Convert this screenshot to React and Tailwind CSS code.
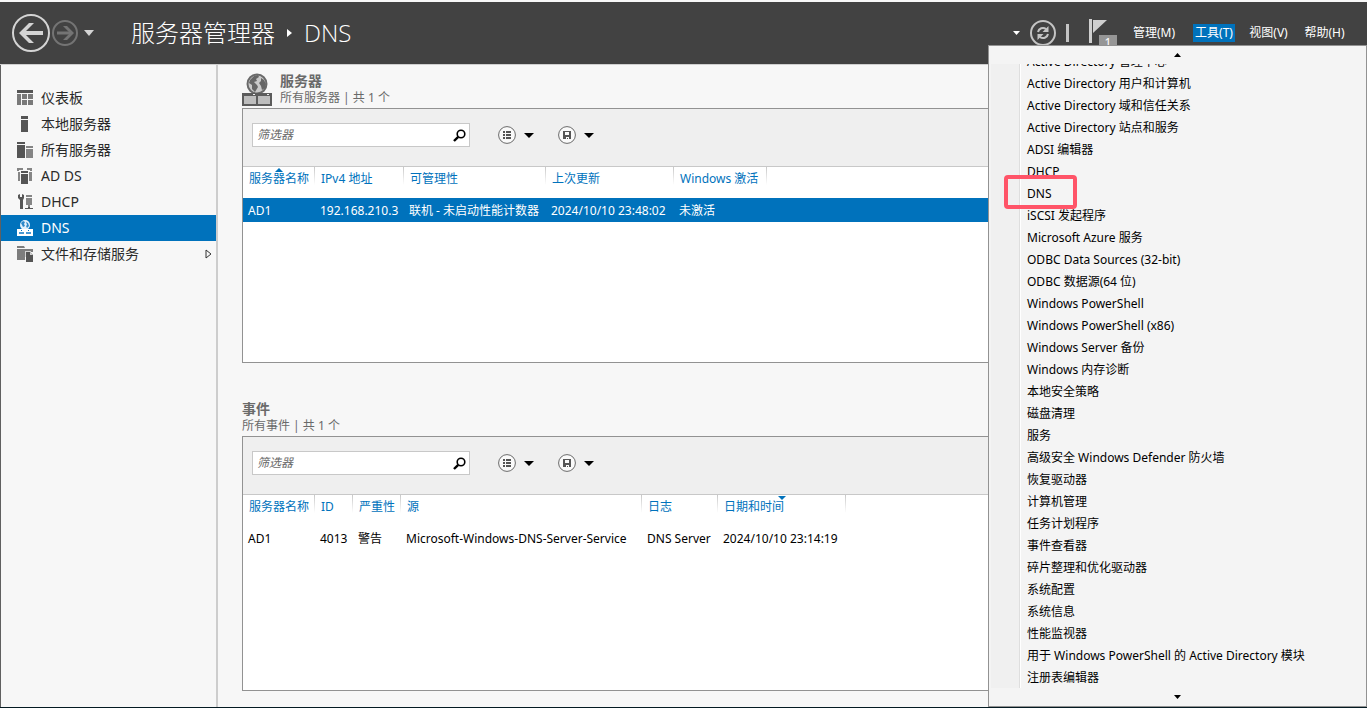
import { useState } from 'react';

const NAV = [
  { id: 'dashboard', label: '仪表板' },
  { id: 'local', label: '本地服务器' },
  { id: 'all', label: '所有服务器' },
  { id: 'adds', label: 'AD DS' },
  { id: 'dhcp', label: 'DHCP' },
  { id: 'dns', label: 'DNS' },
  { id: 'storage', label: '文件和存储服务', expandable: true },
];

const TOOLS = [
  'Active Directory 管理中心',
  'Active Directory 用户和计算机',
  'Active Directory 域和信任关系',
  'Active Directory 站点和服务',
  'ADSI 编辑器',
  'DHCP',
  'DNS',
  'iSCSI 发起程序',
  'Microsoft Azure 服务',
  'ODBC Data Sources (32-bit)',
  'ODBC 数据源(64 位)',
  'Windows PowerShell',
  'Windows PowerShell (x86)',
  'Windows Server 备份',
  'Windows 内存诊断',
  '本地安全策略',
  '磁盘清理',
  '服务',
  '高级安全 Windows Defender 防火墙',
  '恢复驱动器',
  '计算机管理',
  '任务计划程序',
  '事件查看器',
  '碎片整理和优化驱动器',
  '系统配置',
  '系统信息',
  '性能监视器',
  '用于 Windows PowerShell 的 Active Directory 模块',
  '注册表编辑器',
];

const SERVER_COLUMNS = [
  { label: '服务器名称', width: 'w-[72px]', sort: 'asc' },
  { label: 'IPv4 地址', width: 'w-[89px]' },
  { label: '可管理性', width: 'w-[142px]' },
  { label: '上次更新', width: 'w-[128px]' },
  { label: 'Windows 激活', width: 'w-[93px]' },
];

const EVENT_COLUMNS = [
  { label: '服务器名称', width: 'w-[72px]' },
  { label: 'ID', width: 'w-[38px]' },
  { label: '严重性', width: 'w-[48px]' },
  { label: '源', width: 'w-[241px]' },
  { label: '日志', width: 'w-[76px]' },
  { label: '日期和时间', width: 'w-[128px]', sort: 'desc' },
];

const SERVERS = [['AD1', '192.168.210.3', '联机 - 未启动性能计数器', '2024/10/10 23:48:02', '未激活']];
const EVENTS = [['AD1', '4013', '警告', 'Microsoft-Windows-DNS-Server-Service', 'DNS Server', '2024/10/10 23:14:19']];

function Caret({ className = '', up = false, w = 10, h = 5 }) {
  return (
    <svg width={w} height={h} viewBox="0 0 10 5" preserveAspectRatio="none" className={className} aria-hidden="true">
      <path d={up ? 'M0 5h10L5 0z' : 'M0 0h10L5 5z'} fill="currentColor" />
    </svg>
  );
}

function NavIcon({ id }) {
  return (
    <svg width="16" height="16" viewBox="0 0 16 16" className="shrink-0" aria-hidden="true">
      {id === 'dashboard' && (
        <>
          <path d="M0 0h16v3H0z" fill="#555" />
          <path d="M0 4h4v11H0zM5 4h5v5H5zM11 4h5v5h-5zM5 10h5v5H5zM11 10h5v5h-5z" fill="#7a7a7a" />
        </>
      )}
      {id === 'local' && <path d="M4 0h7v3H4zM4 4h7v12H4z" fill="#555" />}
      {id === 'all' && (
        <>
          <path d="M0 0h8v2H0zM0 3h8v13H0z" fill="#555" />
          <path d="M9 4h7v2H9zM9 7h7v9H9z" fill="#858585" />
        </>
      )}
      {id === 'adds' && (
        <>
          <path d="M0 0h6v2H2v1H0zM10 0h5v3h-2V2h-3zM1 4h2v9H1zM12 4h3v9h-3z" fill="#858585" />
          <path d="M4 3h7v2H4zM4 6h7v10H4z" fill="#555" />
        </>
      )}
      {id === 'dhcp' && (
        <>
          <path d="M1 1l2-1v3h2V0l2 1v3L6 6v9H3V6L1 4z" fill="#555" />
          <path d="M9 1h6v2H9zM9 4h6v7H9zM11 11h2v2h-2z" fill="#858585" />
          <path d="M8 14h3v-1h2v1h3v1H8z" fill="#555" />
        </>
      )}
      {id === 'dns' && (
        <>
          <circle cx="8" cy="5" r="5" fill="#e4f1fa" />
          <path d="M4 3l2-2 2 1-1 2 1 2-2 1-1-2zM9 2l2 1 1 3-2 2-1-2 1-1z" fill="#2c88c9" />
          <path d="M0 9h16v7H0z" fill="#fff" />
          <path d="M2 12h5v2H2zM9 12h5v2H9z" fill="#4a9ad4" />
          <path d="M4 10h1v1H4zM11 10h1v1h-1z" fill="#0072bc" />
        </>
      )}
      {id === 'storage' && (
        <>
          <path d="M0 0h7l1 2H0zM0 3h16v3H8v8H0z" fill="#7d7d7d" />
          <path d="M9 6h4l3 3v7H9z" fill="#555" />
          <path d="M8 5h6v1H9v5H8zM13 6l3 3h-3z" fill="#d0d0d0" />
        </>
      )}
    </svg>
  );
}

function GlobeIcon() {
  return (
    <svg width="30" height="33" viewBox="0 0 30 33" className="shrink-0" aria-hidden="true">
      <circle cx="15" cy="11" r="9.5" fill="#c9c9c9" stroke="#6a6a6a" strokeWidth="2" />
      <path d="M8 7l4-4 4-1 1 2-3 2 1 2-3 1 3 3 1 2-3 5-3-3v-4l-3-2zM19 5l3 2 2 4-1 4-3 2-1-4-2-3 2-2z" fill="#666" />
      <path d="M0 20h30v13H0z" fill="#5c5c5c" />
      <path d="M2 23h12v8H2zM16 23h12v8H16z" fill="#bdbdbd" />
      <path d="M11 21h2v1h-2zM25 21h2v1h-2z" fill="#eee" />
    </svg>
  );
}

function Toolbar({ name }) {
  return (
    <div className="flex h-[58px] items-start border-b border-[#c8c8c8] bg-[#efefef] pt-[14px] pl-[9px]">
      <div className="flex h-6 w-[218px] shrink-0 items-center border border-[#c8c8c8] bg-white pr-[3px] pl-1">
        <input
          type="text"
          aria-label={`${name}筛选器`}
          placeholder="筛选器"
          className="min-w-0 flex-1 text-[12px] leading-4 text-black italic outline-none placeholder:text-[#6a6a6a]"
        />
        <button type="button" aria-label="搜索">
          <svg width="13" height="13" viewBox="0 0 13 13" fill="none" stroke="#000">
            <circle cx="8" cy="5" r="3.8" strokeWidth="1.6" />
            <path d="M5.2 7.8L1 12" strokeWidth="2.4" />
          </svg>
        </button>
      </div>
      <button type="button" aria-label="分组" className="ml-7 flex h-6 items-center gap-2">
        <svg width="18" height="18" viewBox="0 0 18 18">
          <circle cx="9" cy="9" r="8.4" fill="#fafafa" stroke="#6a6a6a" />
          <path d="M5 5h2v2H5zM8 5h5v2H8zM5 8h2v2H5zM8 8h5v2H8zM5 11h2v2H5zM8 11h5v2H8z" fill="#555" />
        </svg>
        <Caret />
      </button>
      <button type="button" aria-label="保存" className="ml-6 flex h-6 items-center gap-2">
        <svg width="18" height="18" viewBox="0 0 18 18">
          <circle cx="9" cy="9" r="8.4" fill="#fafafa" stroke="#6a6a6a" />
          <path d="M5 5h8v8h-2v-2H8v2H5zM7 6v3h4V6z" fill="#555" fillRule="evenodd" />
          <path d="M9 12h1v1H9z" fill="#555" />
        </svg>
        <Caret />
      </button>
    </div>
  );
}

function Panel({ name, subtitle, icon, columns, rows, selected }) {
  return (
    <section className="flex flex-1 flex-col">
      <div className="flex h-[35px] shrink-0 gap-2 text-[#6a6a6a]">
        {icon}
        <div>
          <h2 className="text-[14px] leading-4 font-bold">{name}</h2>
          <p className="text-[12px] leading-[18px]">{subtitle}</p>
        </div>
      </div>
      <div className="flex-1 border border-[#929292] bg-white">
        <Toolbar name={name} />
        <table className="w-full table-fixed text-left text-[12px] leading-4 whitespace-nowrap">
          <thead>
            <tr className="h-[31px] text-[#0072bc]">
              {columns.map((col) => (
                <th
                  key={col.label}
                  className={`relative bg-[linear-gradient(#c8c8c8,#fff)] bg-[length:1px_18px] bg-right-top bg-no-repeat pt-1 pl-[6px] align-top font-normal ${col.width}`}
                >
                  {col.label}
                  {col.sort && (
                    <Caret
                      up={col.sort === 'asc'}
                      w={8}
                      h={4}
                      className="absolute top-px left-1/2 -translate-x-1/2"
                    />
                  )}
                </th>
              ))}
              <th />
            </tr>
          </thead>
          <tbody>
            {rows.map((row) => (
              <tr key={row[0]} className={`h-6 ${selected ? 'bg-[#0072bc] text-white' : 'text-black'}`}>
                {row.map((cell) => (
                  <td key={cell} className="pt-[2px] pl-[5px]">{cell}</td>
                ))}
                <td />
              </tr>
            ))}
          </tbody>
        </table>
      </div>
    </section>
  );
}

function ToolsMenu() {
  return (
    <div className="absolute top-[45px] right-0 z-10 w-[379px] border border-[#929292] bg-[#f4f4f4] text-[12px]">
      <button type="button" aria-label="向上滚动" className="flex h-[18px] w-full items-center justify-center">
        <Caret up w={7} h={4} />
      </button>
      <div className="flex h-[624px] overflow-hidden pl-[2px]">
        <div className="w-[29px] shrink-0 border-r border-[#dedede] bg-[#f0f0f0]" />
        <ul className="-mt-[14px] flex-1 border-l border-white">
          {TOOLS.map((tool) => (
            <li key={tool} className="relative">
              <button type="button" className="block h-[22px] w-full pl-[6px] text-left leading-6 whitespace-nowrap text-black">
                {tool}
              </button>
              {tool === 'DNS' && (
                <span className="pointer-events-none absolute -top-[7px] -left-[17px] z-10 h-[34px] w-[73px] rounded-[4px] border-4 border-[#ff5468]" />
              )}
            </li>
          ))}
        </ul>
      </div>
      <button type="button" aria-label="向下滚动" className="flex h-[18px] w-full items-center justify-center">
        <Caret w={7} h={4} />
      </button>
    </div>
  );
}

function Header() {
  return (
    <header className="flex h-[63px] shrink-0 items-center border-b border-[#cfcfcf] bg-[#424242] pr-5 pl-[11px] text-white">
      <button type="button" aria-label="后退">
        <svg width="40" height="40" viewBox="0 0 40 40" fill="none" stroke="#d4d4d4">
          <circle cx="20" cy="20" r="18" strokeWidth="2" />
          <path d="M32 20H11" strokeWidth="4" />
          <path d="M23 10h-5L8 20l10 10h5L13 20z" fill="#d4d4d4" stroke="none" />
        </svg>
      </button>
      <button type="button" aria-label="前进">
        <svg width="28" height="28" viewBox="0 0 28 28" fill="none" stroke="#747474">
          <circle cx="14" cy="14" r="12" strokeWidth="2" />
          <path d="M6 14h13" strokeWidth="3" />
          <path d="M12 7h4l7 7-7 7h-4l7-7z" fill="#747474" stroke="none" />
        </svg>
      </button>
      <button type="button" aria-label="历史记录" className="ml-[5px] text-[#d4d4d4]">
        <Caret w={10} h={6} />
      </button>
      <h1 className="ml-[37px] flex items-center font-['Open_Sans','Noto_Sans_CJK_SC',sans-serif] text-[24px] leading-8 font-light whitespace-nowrap">
        服务器管理器
        <svg width="5" height="8" viewBox="0 0 5 8" className="mx-3" aria-hidden="true">
          <path d="M0 0v8l5-4z" fill="#fff" />
        </svg>
        DNS
      </h1>
      <div className="ml-auto flex items-center text-[12px] leading-[18px]">
        <Caret w={7} h={4} />
        <button type="button" aria-label="刷新" className="ml-[9px]">
          <svg width="28" height="28" viewBox="0 0 28 28" fill="none" stroke="#c4c4c4">
            <circle cx="14" cy="14" r="12" strokeWidth="2" />
            <path d="M9 13a5 5 0 0 1 8-3M19 15a5 5 0 0 1-8 3" strokeWidth="2" />
            <path d="M19.500 7v6h-6zM8.500 21v-6h6z" fill="#c4c4c4" stroke="none" />
          </svg>
        </button>
        <span className="ml-[9px] h-[18px] w-[3px] bg-[#c4c4c4]" />
        <button type="button" aria-label="通知" className="relative ml-5 h-7 w-7">
          <svg width="18" height="28" viewBox="0 0 18 28">
            <path d="M0 0h3v24H0zM4 1h14L4 14z" fill="#cfcfcf" />
          </svg>
          <span className="absolute top-4 left-[10px] h-4 w-[18px] bg-[#969696] text-center text-[12px] leading-4">1</span>
        </button>
        <nav className="ml-[14px] flex items-center gap-3 text-center whitespace-nowrap">
          <button type="button" className="w-[46px]">管理(M)</button>
          <button type="button" className="ml-1 w-[42px] bg-[#0072bc]">工具(T)</button>
          <button type="button" className="w-[43px]">视图(V)</button>
          <button type="button" className="w-[45px]">帮助(H)</button>
        </nav>
      </div>
    </header>
  );
}

export default function App() {
  const [active, setActive] = useState('dns');

  return (
    <div className="relative flex min-h-screen flex-col border-b border-b-[#041a22] bg-[#f7f7f7] pt-[2px] font-['Noto_Sans','Noto_Sans_CJK_SC',sans-serif]">
      <Header />
      <div className="flex flex-1 border-l border-[#606060]">
        <nav className="w-[217px] shrink-0 border-r-2 border-[#cdcdcd] pt-5">
          {NAV.map((item) => (
            <button
              key={item.id}
              type="button"
              onClick={() => setActive(item.id)}
              className={`flex h-[26px] w-full items-center gap-2 pr-1 pl-4 text-[14px] leading-5 ${
                active === item.id ? 'bg-[#0072bc] text-white' : 'text-[#2a2a2a]'
              }`}
            >
              <NavIcon id={item.id} />
              {item.label}
              {item.expandable && (
                <svg width="7" height="10" viewBox="0 0 7 10" className="ml-auto" aria-hidden="true">
                  <path d="M1 1v8l5-4z" fill="none" stroke="#333" />
                </svg>
              )}
            </button>
          ))}
        </nav>
        <main className="flex min-w-0 flex-1 flex-col gap-[38px] pt-2 pr-4 pb-4 pl-6">
          <Panel
            name="服务器"
            subtitle="所有服务器 | 共 1 个"
            icon={<GlobeIcon />}
            columns={SERVER_COLUMNS}
            rows={SERVERS}
            selected
          />
          <Panel name="事件" subtitle="所有事件 | 共 1 个" columns={EVENT_COLUMNS} rows={EVENTS} />
        </main>
      </div>
      <ToolsMenu />
    </div>
  );
}
